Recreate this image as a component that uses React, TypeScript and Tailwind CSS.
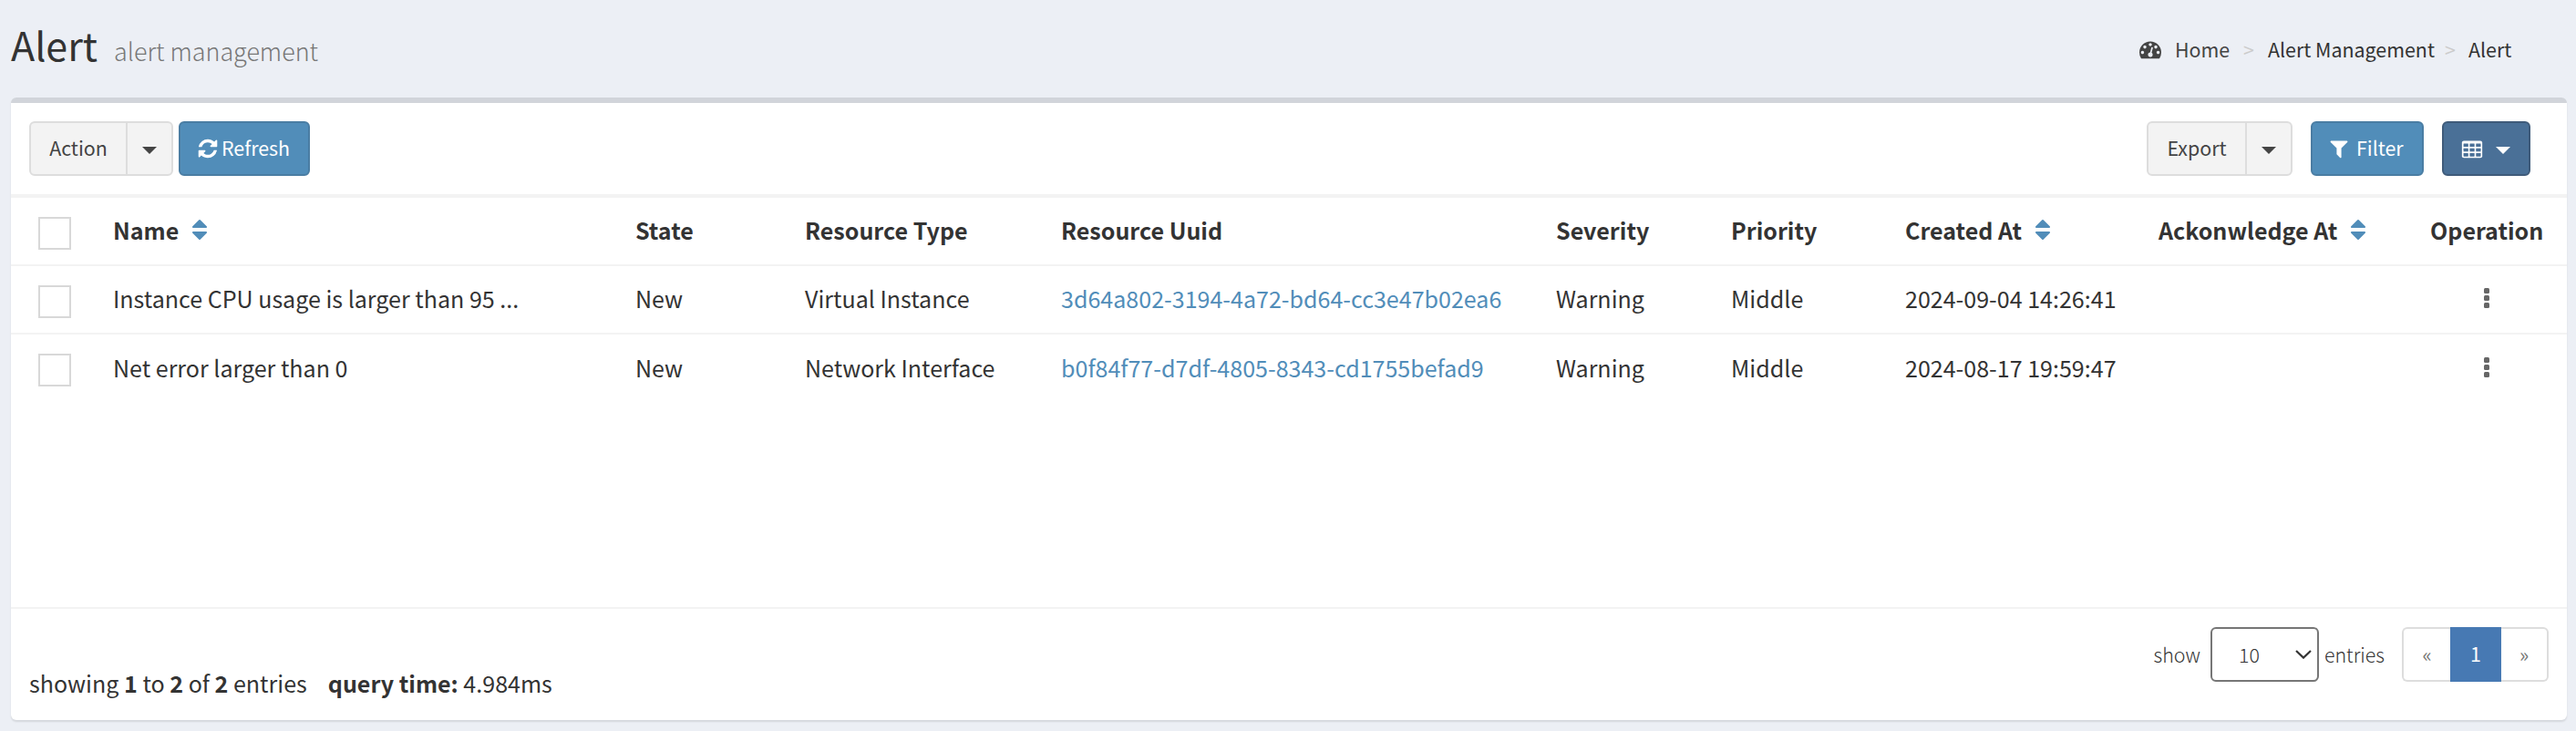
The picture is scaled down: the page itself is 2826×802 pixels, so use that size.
import type { ReactNode } from "react";

const columns = [
  { label: "Name", sortable: true },
  { label: "State" },
  { label: "Resource Type" },
  { label: "Resource Uuid" },
  { label: "Severity" },
  { label: "Priority" },
  { label: "Created At", sortable: true },
  { label: "Ackonwledge At", sortable: true },
  { label: "Operation" },
];

const alerts = [
  {
    name: "Instance CPU usage is larger than 95 ...",
    state: "New",
    type: "Virtual Instance",
    uuid: "3d64a802-3194-4a72-bd64-cc3e47b02ea6",
    severity: "Warning",
    priority: "Middle",
    created: "2024-09-04 14:26:41",
  },
  {
    name: "Net error larger than 0",
    state: "New",
    type: "Network Interface",
    uuid: "b0f84f77-d7df-4805-8343-cd1755befad9",
    severity: "Warning",
    priority: "Middle",
    created: "2024-08-17 19:59:47",
  },
];

const rowGrid =
  "grid grid-cols-[82px_573px_186px_281px_543px_192px_191px_278px_298px_150px] items-center pl-[30px] whitespace-nowrap";

function Glyph({ d, className }: { d: string; className: string }) {
  return (
    <svg viewBox="0 0 1792 1792" fill="currentColor" className={className} aria-hidden="true">
      <path d={d} fillRule="evenodd" />
    </svg>
  );
}

const dashboardPath =
  "M384 1152q0-53-37.5-90.5t-90.5-37.5-90.5 37.5-37.5 90.5 37.5 90.5 90.5 37.5 90.5-37.5 37.5-90.5zm192-448q0-53-37.5-90.5t-90.5-37.5-90.5 37.5-37.5 90.5 37.5 90.5 90.5 37.5 90.5-37.5 37.5-90.5zm428 481l101-382q6-26-7.5-48.5t-38.5-29.5-48 6.5-30 39.5l-101 382q-60 5-107 43.5t-63 98.5q-20 77 20 146t117 89 146-20 89-117q16-60-6-117t-72-91zm660-33q0-53-37.5-90.5t-90.5-37.5-90.5 37.5-37.5 90.5 37.5 90.5 90.5 37.5 90.5-37.5 37.5-90.5zm-640-640q0-53-37.5-90.5t-90.5-37.5-90.5 37.5-37.5 90.5 37.5 90.5 90.5 37.5 90.5-37.5 37.5-90.5zm448 192q0-53-37.5-90.5t-90.5-37.5-90.5 37.5-37.5 90.5 37.5 90.5 90.5 37.5 90.5-37.5 37.5-90.5zm320 448q0 261-141 483-19 29-54 29h-1402q-35 0-54-29-141-221-141-483 0-182 71-348t191-286 286-191 348-71 348 71 286 191 191 286 71 348z";
const refreshPath =
  "M1639 1056q0 5-1 7-64 268-268 434.5t-478 166.5q-146 0-282.5-55t-243.5-157l-129 129q-19 19-45 19t-45-19-19-45v-448q0-26 19-45t45-19h448q26 0 45 19t19 45-19 45l-137 137q71 66 161 102t187 36q134 0 250-65t186-179q11-17 53-117 8-23 30-23h192q13 0 22.5 9.5t9.5 22.5zm25-800v448q0 26-19 45t-45 19h-448q-26 0-45-19t-19-45 19-45l138-138q-148-137-349-137-134 0-250 65t-186 179q-11 17-53 117-8 23-30 23h-199q-13 0-22.5-9.5t-9.5-22.5v-7q65-268 270-434.5t480-166.5q146 0 284 55.5t245 156.5l130-129q19-19 45-19t45 19 19 45z";
const filterPath =
  "M1595 295q17 41-14 70l-493 493v742q0 42-39 59-13 5-25 5-27 0-45-19l-256-256q-19-19-19-45v-486l-493-493q-31-29-14-70 17-39 59-39h1280q42 0 59 39z";
const sortPath =
  "M1408 1088q0 26-19 45l-448 448q-19 19-45 19t-45-19l-448-448q-19-19-19-45t19-45 45-19h896q26 0 45 19t19 45zm0-384q0 26-19 45t-45 19h-896q-26 0-45-19t-19-45 19-45l448-448q19-19 45-19t45 19l448 448q19 19 19 45z";

function TableIcon() {
  const xs = [192, 704, 1216];
  const ys = [480, 874, 1268];
  return (
    <svg viewBox="0 0 1792 1792" className="size-6" aria-hidden="true">
      <rect x="64" y="256" width="1664" height="1408" rx="160" fill="#fff" />
      {ys.map((y) =>
        xs.map((x) => <rect key={`${x}-${y}`} x={x} y={y} width="392" height="272" rx="32" fill="#4a7097" />),
      )}
    </svg>
  );
}

function Caret({ className = "" }: { className?: string }) {
  return (
    <span
      className={`inline-block size-0 border-x-8 border-t-8 border-x-transparent border-t-current ${className}`}
    />
  );
}

function SplitButton({ children, widths }: { children: ReactNode; widths: string }) {
  return (
    <div className="flex h-[60px] rounded-[6px] border-2 border-[#dddddd] bg-[#f3f3f3] text-[#444]">
      <button className={`border-r-2 border-[#dddddd] pb-[2px] text-center ${widths}`}>{children}</button>
      <button className="flex w-[48px] items-center justify-center pt-[3px]">
        <Caret />
      </button>
    </div>
  );
}

function Checkbox() {
  return <span className="mt-[4px] block size-9 border-2 border-[#d8d8d8] bg-white" />;
}

function Kebab() {
  return (
    <span className="ml-[59px] flex w-[6px] flex-col gap-[2px] pb-[1px]">
      <i className="size-[6px] rounded-[1.5px] bg-[#666]" />
      <i className="size-[6px] rounded-[1.5px] bg-[#666]" />
      <i className="size-[6px] rounded-[1.5px] bg-[#666]" />
    </span>
  );
}

export default function App() {
  return (
    <div className="h-[802px] w-[2826px] overflow-hidden bg-[#eceff5] pr-[10px] pl-3 font-['Noto_Sans_CJK_SC',sans-serif] text-[25.06px] leading-[36px] text-[#333]">
      <header className="flex h-[107px] justify-between">
        <h1 className="flex items-baseline pt-[27px] text-[43px] leading-[43px]">
          Alert
          <small className="ml-[18px] text-[26.9px] font-light text-[#777]">alert management</small>
        </h1>
        <nav className="flex w-[469px] pt-[42px] text-[21.4px] leading-[24px] whitespace-nowrap">
          <span className="w-[39px]">
            <Glyph d={dashboardPath} className="size-6 text-[#444]" />
          </span>
          <span className="w-[75px] text-[#444]">Home</span>
          <span className="w-[27px] text-[#ccc]">&gt;</span>
          <span className="w-[194px]">Alert Management</span>
          <span className="w-[26px] text-[#ccc]">&gt;</span>
          <span>Alert</span>
        </nav>
      </header>

      <main className="flex h-[683px] flex-col rounded-[6px] border-t-[6px] border-[#d1d4da] bg-white shadow-[0_2px_2px_rgba(0,0,0,0.1)]">
        <div className="flex h-[104px] items-start justify-between border-b-4 border-[#f3f3f3] pt-5 pr-10 pl-5 text-[21.4px] leading-[54px]">
          <div className="flex gap-[6px]">
            <SplitButton widths="w-[106px]">Action</SplitButton>
            <button className="flex h-[60px] w-[144px] items-center rounded-[6px] border-2 border-[#4a7da3] bg-[#518db9] pb-[2px] pl-[18px] text-white">
              <Glyph d={refreshPath} className="mt-[2px] size-6" />
              <span className="ml-[3px]">Refresh</span>
            </button>
          </div>
          <div className="flex gap-5">
            <SplitButton widths="w-[108px]">Export</SplitButton>
            <button className="flex h-[60px] w-[124px] items-center rounded-[6px] border-2 border-[#4a7da3] bg-[#518db9] pb-[2px] pl-[17px] text-white">
              <Glyph d={filterPath} className="mt-[2px] size-6" />
              <span className="ml-[7px]">Filter</span>
            </button>
            <button className="flex h-[60px] w-[97px] items-center rounded-[6px] border-2 border-[#3f5b7a] bg-[#4a7097] pl-[19px] text-white">
              <TableIcon />
              <Caret className="mt-[3px] ml-[14px]" />
            </button>
          </div>
        </div>

        <div className="h-[451px] border-b-2 border-[#f3f3f3]">
          <div className={`${rowGrid} h-[75px] border-b-2 border-[#f3f3f3] font-bold`}>
            <Checkbox />
            {columns.map((c) => (
              <div key={c.label} className="flex items-center pb-[3px]">
                {c.label}
                {c.sortable && <Glyph d={sortPath} className="ml-[9px] size-7 text-[#518db9]" />}
              </div>
            ))}
          </div>
          {alerts.map((a, i) => (
            <div
              key={a.uuid}
              className={`${rowGrid} h-[75px] ${i === 0 ? "border-b-2 border-[#f3f3f3] [&>div]:pb-[3px]" : "pb-[2px] [&>div]:pb-px"}`}
            >
              <Checkbox />
              <div>{a.name}</div>
              <div>{a.state}</div>
              <div>{a.type}</div>
              <div className="text-[#518db9]">{a.uuid}</div>
              <div>{a.severity}</div>
              <div>{a.priority}</div>
              <div>{a.created}</div>
              <div />
              <div>
                <Kebab />
              </div>
            </div>
          ))}
        </div>

        <footer className="flex items-start justify-between pt-5 pr-5 pl-5">
          <p className="pt-[43px] whitespace-pre">
            showing <b>1</b> to <b>2</b> of <b>2</b> entries
            <b className="ml-[23px]">query time:</b> 4.984ms
          </p>
          <div className="flex items-center text-[21.4px] leading-[60px] font-light">
            <span>show</span>
            <div className="mr-[6px] ml-[11px] flex h-[60px] w-[119px] items-center justify-between rounded-[6px] border-2 border-[#767676] pr-[6px] pl-[29px]">
              10
              <svg viewBox="0 0 18 10" className="h-[10px] w-[18px]" fill="none" stroke="#333" strokeWidth="2.2">
                <path d="M1 1l8 7.6L17 1" />
              </svg>
            </div>
            <span>entries</span>
            <div className="ml-[19px] flex h-[60px] text-center leading-[56px] font-normal text-[#777]">
              <span className="w-[53px] rounded-l-[6px] border-2 border-r-0 border-[#dddddd]">«</span>
              <span className="w-[56px] bg-[#4779b3] leading-[58px] text-white">1</span>
              <span className="w-[52px] rounded-r-[6px] border-2 border-l-0 border-[#dddddd]">»</span>
            </div>
          </div>
        </footer>
      </main>
    </div>
  );
}
